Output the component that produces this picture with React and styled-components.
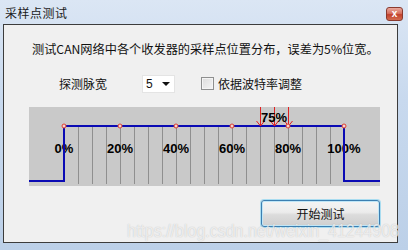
import styled, { createGlobalStyle } from "styled-components";

const GlobalStyle = createGlobalStyle`
  html, body {
    margin: 0;
    padding: 0;
    background: #c9d9ee;
  }
  * {
    box-sizing: border-box;
  }
`;

const CJK = `"Noto Sans CJK SC", "Liberation Sans", sans-serif`;

const Window = styled.div`
  position: relative;
  width: 408px;
  height: 250px;
  display: flex;
  flex-direction: column;
  background: linear-gradient(180deg, #dbe6f4 0%, #c8d9ee 40%, #bcd0e8 100%);
  overflow: hidden;
  font-family: ${CJK};
`;

const TitleBar = styled.div`
  height: 24px;
  display: flex;
  align-items: center;
  justify-content: space-between;
  padding: 0 5px 0 5px;
`;

const Title = styled.div`
  font-size: 12px;
  letter-spacing: 0.5px;
  color: #1a1a1a;
  line-height: 14px;
  margin-top: 2px;
`;

const CloseButton = styled.div`
  width: 17px;
  height: 14px;
  margin-top: 4px;
  border-radius: 3px;
  border: 1px solid #8a3a2e;
  background: linear-gradient(180deg, #e9a89c 0%, #d6705f 45%, #c2412c 55%, #d36b4e 100%);
  color: #fff;
  font-family: "Liberation Sans", sans-serif;
  font-weight: bold;
  font-size: 10px;
  line-height: 12px;
  text-align: center;
`;

const Content = styled.div`
  margin-left: 3px;
  width: 395px;
  height: 219px;
  border: 1px solid #3c3c3c;
  background: #f0f0f0;
  display: flex;
  flex-direction: column;
`;

const Description = styled.div`
  padding: 16px 0 0 28px;
  font-size: 12.2px;
  line-height: 16px;
  color: #111;
  white-space: nowrap;
`;

const OptionRow = styled.div`
  margin-top: 17px;
  height: 19px;
  display: flex;
  align-items: center;
  padding-left: 55px;
`;

const Label = styled.span`
  font-size: 12px;
  line-height: 14px;
  color: #111;
  margin-left: ${(p) => p.$gap || 0}px;
  white-space: nowrap;
`;

const Select = styled.div`
  margin-left: 35px;
  width: 33px;
  height: 18px;
  background: #fff;
  border: 1px solid #e4e4e4;
  display: flex;
  align-items: center;
  justify-content: space-between;
  padding: 0 4px 0 3px;
  font-family: "Liberation Sans", sans-serif;
  font-size: 12px;
  color: #111;
`;

const Arrow = styled.span`
  width: 0;
  height: 0;
  border-left: 4px solid transparent;
  border-right: 4px solid transparent;
  border-top: 4px solid #111;
`;

const Checkbox = styled.span`
  margin-left: 26px;
  width: 13px;
  height: 13px;
  border: 1px solid #8e8f8f;
  background: linear-gradient(135deg, #dcdcdc 0%, #f4f4f4 100%);
  box-shadow: inset 0 0 0 1px #f4f4f4;
`;

const Panel = styled.div`
  margin: 14px 0 0 25px;
  width: 351px;
  height: 79px;
  background: #c9c9c9;
`;

const ButtonRow = styled.div`
  margin-top: 14px;
  display: flex;
  justify-content: flex-end;
  padding-right: 17px;
`;

const Button = styled.button`
  width: 119px;
  height: 27px;
  border: 1px solid #3c7fb1;
  border-radius: 3px;
  background: linear-gradient(180deg, #f4f4f4 0%, #ececec 45%, #dcdcdc 55%, #cfcfcf 100%);
  box-shadow: 0 0 0 1px #a9dcf0, inset 0 0 0 1px #bfe6f7;
  font-family: ${CJK};
  font-size: 12px;
  color: #111;
  padding: 0;
`;

const Watermark = styled.div`
  position: absolute;
  left: 127px;
  top: 222px;
  font-family: "Liberation Sans", sans-serif;
  font-size: 16px;
  transform: scaleY(1.15);
  color: rgba(255, 255, 255, 0.7);
  text-shadow: 0 0 1px rgba(120, 120, 120, 0.45);
  white-space: nowrap;
  pointer-events: none;
`;

const X0 = 35;
const STEP = 14;
const HIGH = 19;
const LOW = 74;

const SampleChart = () => {
  const grid = Array.from({ length: 19 }, (_, i) => X0 + STEP * (i + 1));
  const marks = [0, 20, 40, 60, 80, 100];
  const reds = [70, 75, 80].map((p) => X0 + (p / 5) * STEP);
  return (
    <svg width="351" height="79" viewBox="0 0 351 79">
      {grid.map((x) => (
        <line key={x} x1={x + 0.5} y1={HIGH} x2={x + 0.5} y2={77} stroke="#8f8f8f" strokeWidth="1" />
      ))}
      {marks.map((p) => (
        <text
          key={p}
          x={X0 + (p / 5) * STEP}
          y={46}
          textAnchor="middle"
          fontFamily="Liberation Sans, sans-serif"
          fontWeight="bold"
          fontSize="13"
          fill="#000"
        >
          {p}%
        </text>
      ))}
      <polyline
        points={`0,${LOW} ${X0},${LOW} ${X0},${HIGH} ${X0 + 280},${HIGH} ${X0 + 280},${LOW} 351,${LOW}`}
        fill="none"
        stroke="#0a0ab4"
        strokeWidth="2"
      />
      {reds.map((x) => (
        <g key={x} stroke="#e02020" strokeWidth="1" fill="none">
          <line x1={x + 0.5} y1={0} x2={x + 0.5} y2={HIGH} />
          <polyline points={`${x - 3.5},${HIGH - 5} ${x + 0.5},${HIGH} ${x + 4.5},${HIGH - 5}`} />
        </g>
      ))}
      <text
        x={X0 + 15 * STEP}
        y={15}
        textAnchor="middle"
        fontFamily="Liberation Sans, sans-serif"
        fontWeight="bold"
        fontSize="13"
        fill="#000"
      >
        75%
      </text>
      {marks.map((p) => (
        <circle key={p} cx={X0 + (p / 5) * STEP} cy={HIGH} r="2" fill="#f4d4d0" stroke="#e04030" strokeWidth="1" />
      ))}
    </svg>
  );
};

const App = () => {
  return (
    <>
      <GlobalStyle />
      <Window>
        <TitleBar>
          <Title>采样点测试</Title>
          <CloseButton>x</CloseButton>
        </TitleBar>
        <Content>
          <Description>测试CAN网络中各个收发器的采样点位置分布，误差为5%位宽。</Description>
          <OptionRow>
            <Label>探测脉宽</Label>
            <Select>
              5 <Arrow />
            </Select>
            <Checkbox />
            <Label $gap={4}>依据波特率调整</Label>
          </OptionRow>
          <Panel>
            <SampleChart />
          </Panel>
          <ButtonRow>
            <Button>开始测试</Button>
          </ButtonRow>
        </Content>
        <Watermark>https://blog.csdn.net/weixin_41244908</Watermark>
      </Window>
    </>
  );
};

export default App;
